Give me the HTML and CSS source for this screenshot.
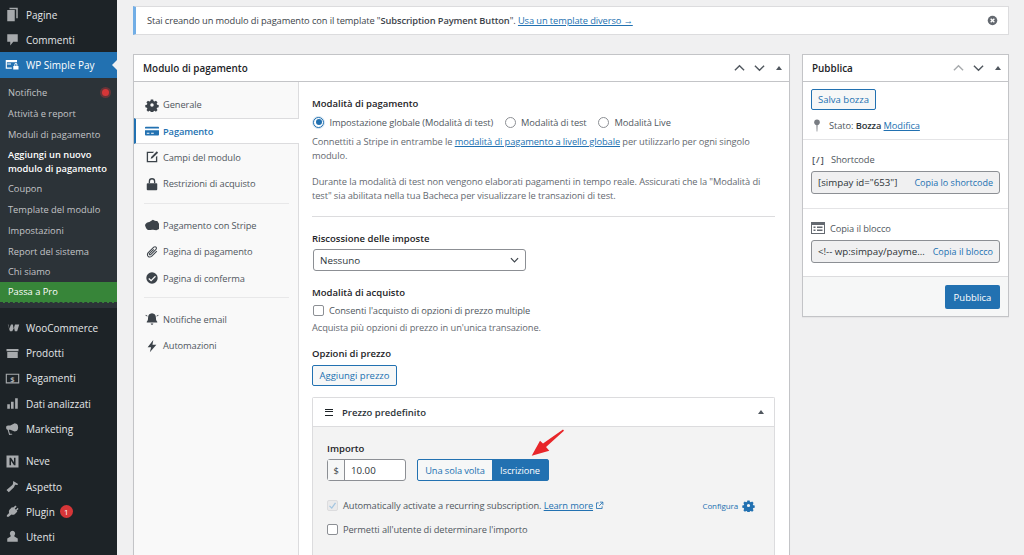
FILE: index.html
```html
<!DOCTYPE html>
<html lang="it">
<head>
<meta charset="utf-8">
<title>Modulo di pagamento</title>
<link rel="stylesheet" href="styles.css">
</head>
<body>
<div class="app">
  <nav class="sidebar">
    <div class="group">
      <a class="mi"><svg class="mi-ic" viewBox="0 0 20 20"><path d="M6 1h11v14h-2V3H6zM3 4h10v15H3z"/></svg>Pagine</a>
      <a class="mi"><svg class="mi-ic" viewBox="0 0 20 20"><path d="M3 3h14v10h-6l-4 5v-5H3z"/></svg>Commenti</a>
      <a class="mi mi-current"><svg class="mi-ic" viewBox="0 0 20 20"><path d="M1 4h15v3H2.500v7H9v1.500H1zM3 8.500h5V10H3zM11 12h7v4.500h-7zM12.500 12V10a2 2 0 0 1 4 0v2h-1.200v-2a.8.8 0 0 0-1.600 0v2z"/></svg>WP Simple Pay</a>
      <div class="sub">
        <a class="si">Notifiche<span class="dot"></span></a>
        <a class="si">Attività e report</a>
        <a class="si">Moduli di pagamento</a>
        <a class="si si-on">Aggiungi un nuovo modulo di pagamento</a>
        <a class="si">Coupon</a>
        <a class="si">Template del modulo</a>
        <a class="si">Impostazioni</a>
        <a class="si">Report del sistema</a>
        <a class="si">Chi siamo</a>
        <a class="si si-pro">Passa a Pro</a>
      </div>
    </div>
    <div class="group">
      <a class="mi"><svg class="mi-ic" viewBox="0 0 20 20"><path d="M1 6h3.500l1 6 2.500-6h2.500l1 6 1.800-6H19l-2.800 9h-3.100l-1-5-2.400 5H6.600L4.800 9.500 3.800 6z"/></svg>WooCommerce</a>
      <a class="mi"><svg class="mi-ic" viewBox="0 0 20 20"><path d="M2 4h16v3H2zM3 8h14v8H3z"/></svg>Prodotti</a>
      <a class="mi"><svg class="mi-ic" viewBox="0 0 20 20"><path fill-rule="evenodd" d="M1 3.500h18v13H1zM2.500 5v10h15V5z"/><text x="10" y="14" class="dollar">$</text></svg>Pagamenti</a>
      <a class="mi"><svg class="mi-ic" viewBox="0 0 20 20"><path d="M3 11h3.500v6H3zM8 7.500h3.500V17H8zM13.500 3H17v14h-3.500z"/></svg>Dati analizzati</a>
      <a class="mi"><svg class="mi-ic" viewBox="0 0 20 20"><path d="M13 3l3 1c2 2 2 7 0 9l-3 1-6-2.500H5L6.500 17H9l1 1-4.500.500L3.500 11.500C2 11 1.500 10 1.500 8.500S2.500 6 4 6h3z"/></svg>Marketing</a>
    </div>
    <div class="group">
      <a class="mi"><svg class="mi-ic" viewBox="0 0 20 20"><path fill-rule="evenodd" d="M2 2h16v16H2zM6 5v10h2V9l4 6h2V5h-2v6L8 5z"/></svg>Neve</a>
      <a class="mi"><svg class="mi-ic" viewBox="0 0 20 20"><path d="M11 2.500l6.500 4-1 1.500-3-.5-1 2-.5 1.500-7 6.500-3-3 7-6 1.500-1.500z"/></svg>Aspetto</a>
      <a class="mi"><svg class="mi-ic" viewBox="0 0 20 20"><path d="M14 2l1.500 1.500-2.500 2.500 1.500 1.500L17 5l1 1.500-2.500 2.500 1 1-3.500 3.500c-1.500 1-3 1-4.500.5L5 17H2.500v-2l3-3c-.5-1.500-.5-3 .5-4.500L9.500 4l1 1z"/></svg>Plugin<span class="count">1</span></a>
      <a class="mi"><svg class="mi-ic" viewBox="0 0 20 20"><path d="M10 2.500a3.500 3.500 0 0 1 2.500 6V10l4.500 2.500V17H3v-4.500L7.500 10V8.500a3.500 3.500 0 0 1 2.500-6z"/></svg>Utenti</a>
    </div>
  </nav>

  <main class="main">
    <div class="notice">
      <p class="notice-text">Stai creando un modulo di pagamento con il template "<b>Subscription Payment Button</b>". <a class="link">Usa un template diverso →</a></p>
      <svg class="notice-x" viewBox="0 0 12 12"><circle cx="6" cy="6" r="5.200" fill="#646970"/><path d="M4 4l4 4M8 4l-4 4" stroke="#fff" stroke-width="1.500"/></svg>
    </div>

    <div class="columns">
      <section class="box box-main">
        <header class="box-head">
          <h2 class="box-title">Modulo di pagamento</h2>
          <div class="box-ctrl">
            <svg class="ctrl" viewBox="0 0 12 8"><path d="M1 6.500l5-5 5 5" /></svg>
            <svg class="ctrl" viewBox="0 0 12 8"><path d="M1 1.500l5 5 5-5" /></svg>
            <span class="tri"></span>
          </div>
        </header>
        <div class="box-body">
          <ul class="tabs">
            <li class="tab"><svg class="tab-ic" viewBox="0 0 16 16"><path fill-rule="evenodd" d="M6.500 1h3l.4 2 1.300.6 1.800-1.100 2 2.100-1.100 1.700.6 1.300 2 .4v3l-2 .4-.6 1.300 1.100 1.700-2 2.100-1.800-1.100-1.300.6-.4 2h-3l-.4-2-1.300-.6-1.800 1.100-2-2.100 1.100-1.700-.6-1.300-2-.4v-3l2-.4.6-1.300L.9 4.600l2-2.100 1.800 1.100L6 3zM8 5.800a2.200 2.200 0 1 0 0 4.400 2.200 2.200 0 0 0 0-4.400z" transform="translate(.8 .8) scale(.9)"/></svg>Generale</li>
            <li class="tab tab-on"><svg class="tab-ic" viewBox="0 0 16 16"><path fill="#2271b1" d="M1 3h14a1 1 0 0 1 1 1v1H0V4a1 1 0 0 1 1-1zM0 7h16v5a1 1 0 0 1-1 1H1a1 1 0 0 1-1-1zm2 3v1h3v-1zm5 0v1h3v-1z"/></svg>Pagamento</li>
            <li class="tab"><svg class="tab-ic" viewBox="0 0 16 16"><path d="M2 2h8.500L9 3.500H3.500v9h9V8L14 6.500V14H2z"/><path d="M13.500 1.500l1.500 1.500-6.500 6.500-2 .5.500-2z"/></svg>Campi del modulo</li>
            <li class="tab tab-end"><svg class="tab-ic" viewBox="0 0 16 16"><path d="M3 7h10a1 1 0 0 1 1 1v6a1 1 0 0 1-1 1H3a1 1 0 0 1-1-1V8a1 1 0 0 1 1-1z"/><path d="M5 7V5a3 3 0 0 1 6 0v2" fill="none" stroke="#3c434a" stroke-width="1.500"/></svg>Restrizioni di acquisto</li>
            <li class="tab"><svg class="tab-ic" viewBox="0 0 16 16"><path d="M0 8c1-2.500 3-3.500 5-3.500L9 2c1.500 1 3 1.500 5 1.500l2 3v6l-3 1.500c-2-.5-3.500-1-5-.5-2.500 .5-5 .5-6-1-1-1-1.500-2.500-2-4.500z"/></svg>Pagamento con Stripe</li>
            <li class="tab"><svg class="tab-ic" viewBox="0 0 16 16"><path fill="none" stroke="#3c434a" stroke-width="1.200" d="M13.500 7l-6 6c-3 2-6-1-4-4l6.500-6.500c2-1.500 4 .5 2.500 2.500l-6 6c-1 .8-2-.2-1.300-1.300L10 5"/></svg>Pagina di pagamento</li>
            <li class="tab tab-end"><svg class="tab-ic" viewBox="0 0 16 16"><path fill-rule="evenodd" d="M8 1.500a6.500 6.500 0 1 1 0 13 6.500 6.500 0 0 1 0-13zM11.500 5.500L7 10 4.800 7.900 3.800 9 7 12l5.500-5.500z"/></svg>Pagina di conferma</li>
            <li class="tab"><svg class="tab-ic" viewBox="0 0 16 16"><path d="M8 1.500c3 0 4.500 2.500 4.500 5 0 2.500.5 3.500 1.500 4.500v1H2v-1c1-1 1.500-2 1.500-4.500 0-2.500 1.500-5 4.500-5zM6.500 13h3a1.500 1.500 0 0 1-3 0zM1 3l2 1.500-.5.500L.5 4zM15 3l-2 1.500.5.500 2-1z"/></svg>Notifiche email</li>
            <li class="tab"><svg class="tab-ic" viewBox="0 0 16 16"><path d="M9.500 1L3 9.500h4L5.500 15 13 6.500H8.500z"/></svg>Automazioni</li>
          </ul>

          <div class="panel">
            <h3 class="lbl">Modalità di pagamento</h3>
            <div class="radios">
              <label class="radio"><span class="rd rd-on"></span>Impostazione globale (Modalità di test)</label>
              <label class="radio"><span class="rd"></span>Modalità di test</label>
              <label class="radio"><span class="rd"></span>Modalità Live</label>
            </div>
            <p class="desc">Connettiti a Stripe in entrambe le <a class="link">modalità di pagamento a livello globale</a> per utilizzarlo per ogni singolo modulo.</p>
            <p class="desc desc-gap">Durante la modalità di test non vengono elaborati pagamenti in tempo reale. Assicurati che la "Modalità di test" sia abilitata nella tua Bacheca per visualizzare le transazioni di test.</p>
            <hr class="rule">
            <h3 class="lbl lbl-tax">Riscossione delle imposte</h3>
            <div class="select">Nessuno<svg class="sel-ic" viewBox="0 0 10 6"><path d="M1 1l4 4 4-4"/></svg></div>
            <h3 class="lbl lbl-buy">Modalità di acquisto</h3>
            <label class="check check-multi"><span class="cb"></span>Consenti l'acquisto di opzioni di prezzo multiple</label>
            <p class="desc desc-buy">Acquista più opzioni di prezzo in un'unica transazione.</p>
            <h3 class="lbl lbl-price">Opzioni di prezzo</h3>
            <a class="btn btn-add">Aggiungi prezzo</a>

            <div class="price">
              <div class="price-head">
                <span class="burger"></span>
                <b class="price-title">Prezzo predefinito</b>
                <span class="tri"></span>
              </div>
              <div class="price-body">
                <h3 class="lbl">Importo</h3>
                <div class="amount-row">
                  <div class="amount"><span class="cur">$</span><span class="val">10.00</span></div>
                  <div class="toggle"><span class="tg">Una sola volta</span><span class="tg tg-on">Iscrizione</span></div>
                  <svg class="arrow" viewBox="0 0 36 30"><path d="M1.700 26.700L10 11.700l3 2.900L33 .5l1 1.300L16 18l3.300 3.700z" fill="#e8262a"/></svg>
                </div>
                <div class="auto">
                  <label class="check check-auto"><span class="cb cb-dis"><svg class="tick" viewBox="0 0 12 12"><path d="M2 6.500l3 3 5-7"/></svg></span><span class="auto-text">Automatically activate a recurring subscription. <a class="link">Learn more</a></span><svg class="ext" viewBox="0 0 12 12"><path d="M5 2.500H2v7.500h7.500V7M6.500 1.500h4v4M10.500 1.500L5.500 6.500"/></svg></label>
                  <a class="config">Configura<svg class="config-ic" viewBox="0 0 16 16"><path fill-rule="evenodd" d="M6.500 1h3l.4 2 1.300.6 1.800-1.100 2 2.100-1.100 1.700.6 1.300 2 .4v3l-2 .4-.6 1.300 1.100 1.700-2 2.100-1.800-1.100-1.300.6-.4 2h-3l-.4-2-1.300-.6-1.800 1.100-2-2.100 1.100-1.700-.6-1.300-2-.4v-3l2-.4.6-1.300L.9 4.600l2-2.100 1.800 1.100L6 3zM8 5.800a2.200 2.200 0 1 0 0 4.400 2.200 2.200 0 0 0 0-4.400z" transform="translate(.8 .8) scale(.9)"/></svg></a>
                </div>
                <label class="check check-perm"><span class="cb"></span>Permetti all'utente di determinare l'importo</label>
              </div>
            </div>
          </div>
        </div>
      </section>

      <aside class="box box-side">
        <header class="box-head">
          <h2 class="box-title">Pubblica</h2>
          <div class="box-ctrl box-ctrl-side">
            <svg class="ctrl ctrl-dim" viewBox="0 0 12 8"><path d="M1 6.500l5-5 5 5" /></svg>
            <svg class="ctrl" viewBox="0 0 12 8"><path d="M1 1.500l5 5 5-5" /></svg>
            <span class="tri"></span>
          </div>
        </header>
        <div class="sec sec-pub">
          <a class="btn btn-save">Salva bozza</a>
          <div class="state"><svg class="pin" viewBox="0 0 10 16"><circle cx="5" cy="4" r="3.500"/><path d="M4.200 6h1.600L5.400 15.500h-.8z"/></svg><span>Stato: <b>Bozza</b> <a class="link">Modifica</a></span></div>
        </div>
        <div class="sec sec-short">
          <div class="sec-title"><span class="sc-ic">[/]</span>Shortcode</div>
          <div class="copy"><span class="copy-val">[simpay id="653"]</span><a class="copy-btn">Copia lo shortcode</a></div>
        </div>
        <div class="sec sec-block">
          <div class="sec-title"><svg class="bl-ic" viewBox="0 0 14 12"><path fill-rule="evenodd" d="M0 0h14v12H0zM1 3v8h12V3zM2.500 4.500h2v1.500h-2zM6 4.500h5.500v1.500H6zM2.500 7.500h2V9h-2zM6 7.500h5.500V9H6z"/></svg>Copia il blocco</div>
          <div class="copy"><span class="copy-val">&lt;!-- wp:simpay/payme...</span><a class="copy-btn">Copia il blocco</a></div>
        </div>
        <div class="pub-foot"><a class="btn-pub">Pubblica</a></div>
      </aside>
    </div>
  </main>
</div>
</body>
</html>
```
FILE: styles.css
```css
* { box-sizing: border-box; }
html, body { margin: 0; height: 555px; overflow: hidden; }
body { font-family: "Open Sans", "Noto Sans", sans-serif; font-size: 9.300px; letter-spacing: -.1px; color: #3c434a; background: #f0f0f1; }
h2, h3, p, ul { margin: 0; padding: 0; }
ul { list-style: none; }
a { color: inherit; text-decoration: none; }
.link { color: #2271b1; text-decoration: underline; }
b { font-weight: 600; }
.app { display: flex; height: 555px; overflow: hidden; }

/* sidebar */
.sidebar { width: 117px; flex: none; background: #1d2327; color: #f0f0f1; padding-top: 2px; display: flex; flex-direction: column; gap: 7.500px; letter-spacing: 0; }
.mi { display: flex; align-items: center; height: 25.200px; padding-left: 26px; position: relative; font-size: 10px; color: #e4e6e8; }
.mi-ic { position: absolute; left: 5px; top: 5px; width: 15px; height: 15px; fill: #a7aaad; }
.dollar { font: 700 10px "Open Sans", sans-serif; text-anchor: middle; fill: #a7aaad; }
.mi-current { background: #2271b1; color: #fff; height: 26px; }
.mi-current .mi-ic { fill: #fff; }
.mi-current::after { content: ""; position: absolute; right: 0; top: 8px; border: 5px solid transparent; border-right-color: #f0f0f1; border-left-width: 0; }
.sub { background: #2c3338; padding: 4px 0 5px; }
.si { display: flex; align-items: center; min-height: 20.750px; padding: 0 8px; font-size: 9.300px; line-height: 13.500px; color: #c3c4c7; position: relative; }
.si-on { color: #fff; font-weight: 600; padding-top: 3.500px; padding-bottom: 3.500px; }
.si-pro { background: #378539; color: #fff; height: 20.500px; min-height: 0; border-bottom: 1px dashed #2c3338; }
.dot { position: absolute; left: 102px; top: 7px; width: 7px; height: 7px; border-radius: 50%; background: #d63638; box-shadow: 0 0 0 2px rgba(214, 54, 56, .35); }
.count { display: inline-flex; align-items: center; justify-content: center; width: 13px; height: 13px; border-radius: 50%; margin-left: 5px; background: #d63638; color: #fff; font-size: 8px; }

/* main */
.main { flex: 1; min-width: 0; padding: 6px 15px 0 16px; }
.notice { display: flex; align-items: center; justify-content: space-between; height: 29px; padding: 0 10px 0 11px; background: #fff; border: 1px solid #dcdcde; border-left: 3px solid #72aee6; }
.notice-x { width: 11px; height: 11px; }
.columns { display: flex; align-items: flex-start; gap: 12px; margin-top: 19px; }

.box { background: #fff; border: 1px solid #c3c4c7; box-shadow: 0 1px 1px rgba(0, 0, 0, .04); }
.box-main { width: 657px; height: 501px; display: flex; flex-direction: column; border-bottom: 0; }
.box-side { width: 207px; }
.box-head { display: flex; align-items: center; justify-content: space-between; height: 27px; margin-bottom: -1px; padding: 0 7px 1px 9px; border-bottom: 1px solid #c3c4c7; flex: none; }
.box-title { font-size: 9.900px; font-weight: 600; color: #1d2327; letter-spacing: 0; }
.box-ctrl { display: flex; align-items: center; gap: 9px; }
.ctrl { width: 11px; height: 8px; fill: none; stroke: #50575e; stroke-width: 1.500px; }
.ctrl-dim { stroke: #a7aaad; }
.tri { display: block; width: 0; height: 0; border: 3.500px solid transparent; border-top-width: 0; border-bottom: 4px solid #50575e; margin-left: 2px; }

.box-body { flex: 1; display: flex; min-height: 0; padding-top: 1px; }
.tabs { width: 165px; flex: none; background: #f9f9f9; border-right: 1px solid #dcdcde; padding-top: 9.500px; }
.tab { display: flex; align-items: center; height: 26.400px; padding-left: 11px; color: #50575e; margin-right: -1px; }
.tab-ic { width: 14px; height: 14px; margin-right: 4px; fill: #3c434a; flex: none; }
.tab-on { background: #fff; color: #2271b1; font-weight: 600; border-left: 2px solid #2271b1; padding-left: 9px; border-top: 1px solid #dcdcde; border-bottom: 1px solid #dcdcde; position: relative; }
.tab-end { margin-bottom: 15px; position: relative; }
.tab-end::after { content: ""; position: absolute; left: 10px; right: 10px; bottom: -7px; height: 1px; background: #e8e8e9; }

.panel { flex: 1; min-width: 0; padding: 15px 14px 0 13px; }
.lbl { font-size: 9.500px; font-weight: 600; color: #1d2327; line-height: 13px; letter-spacing: 0; }
.radios { display: flex; gap: 11.500px; margin: 5px 0 0 1px; height: 14px; align-items: center; }
.radio { display: flex; align-items: center; gap: 5.500px; color: #50575e; }
.rd { width: 11px; height: 11px; border-radius: 50%; border: 1px solid #8c8f94; background: #fff; position: relative; flex: none; }
.rd-on { border-color: #2271b1; box-shadow: 0 0 0 1px #d5e4f0; }
.rd-on::after { content: ""; position: absolute; inset: 1.500px; border-radius: 50%; background: #2271b1; }
.desc { line-height: 14px; margin-top: 6px; color: #646970; }
.desc-gap { margin-top: 12px; }
.rule { border: 0; height: 1px; background: #dcdcde; margin: 13px 0 0; }
.lbl-tax { margin-top: 15px; }
.select { display: flex; align-items: center; justify-content: space-between; width: 213px; height: 22px; margin: 4px 0 0 1px; padding: 0 6px; background: #fff; border: 1px solid #8c8f94; border-radius: 3px; color: #2c3338; font-size: 9.800px; letter-spacing: 0; }
.sel-ic { width: 9px; height: 6px; fill: none; stroke: #3c434a; stroke-width: 1.300px; }
.lbl-buy { margin-top: 15px; }
.check { display: flex; align-items: center; gap: 5px; color: #50575e; }
.check-multi { margin-top: 4px; height: 14px; margin-left: 1px; }
.cb { width: 11px; height: 11px; border: 1px solid #8c8f94; border-radius: 2px; background: #fff; flex: none; display: flex; }
.desc-buy { margin-top: 4px; line-height: 13px; }
.lbl-price { margin-top: 13px; }
.btn { display: inline-flex; align-items: center; justify-content: center; border: 1px solid #2271b1; border-radius: 2px; color: #2271b1; background: #f6f7f7; font-size: 9.500px; letter-spacing: 0; }
.btn-add { width: 85px; height: 21px; margin-top: 5px; }
.price { margin-top: 11px; border: 1px solid #dcdcde; border-bottom: 0; background: #f3f3f3; height: 158px; border-radius: 2px 2px 0 0; }
.price-head { display: flex; align-items: center; height: 29px; padding: 0 10px 0 12px; background: #fff; border-bottom: 1px solid #dcdcde; }
.burger { width: 8px; height: 7px; border-top: 1.500px solid #1d2327; border-bottom: 1.500px solid #1d2327; position: relative; margin-right: 9px; }
.burger::after { content: ""; position: absolute; left: 0; right: 0; top: 1.500px; height: 1.200px; background: #1d2327; }
.price-title { flex: 1; font-size: 9.500px; color: #2c3338; font-weight: 600; letter-spacing: 0; }
.price-body { padding: 15px 14px 0; }
.amount-row { display: flex; align-items: center; gap: 11px; margin-top: 4px; position: relative; }
.amount { display: flex; width: 79px; height: 22px; background: #fff; border: 1px solid #8c8f94; border-radius: 3px; }
.cur { width: 17px; display: flex; align-items: center; justify-content: center; background: #f6f7f7; border-right: 1px solid #8c8f94; }
.val { padding-left: 6px; display: flex; align-items: center; color: #2c3338; font-size: 9.700px; letter-spacing: 0; }
.toggle { display: flex; width: 132px; height: 22px; border: 1px solid #2271b1; border-radius: 2px; background: #f6f7f7; color: #2271b1; }
.tg { flex: 1; display: flex; align-items: center; justify-content: center; }
.tg-on { flex: none; width: 56px; background: #2271b1; color: #fff; }
.arrow { position: absolute; left: 203px; top: -30px; width: 36px; height: 30px; }
.auto { display: flex; align-items: center; justify-content: space-between; margin-top: 17px; height: 14px; }
.auto-text { white-space: nowrap; }
.cb-dis { background: #eaeaeb; border-color: #dcdcde; }
.tick { width: 9px; height: 9px; fill: none; stroke: #a3c5e0; stroke-width: 1.700px; }
.ext { width: 9px; height: 9px; margin-left: -3px; fill: none; stroke: #2271b1; stroke-width: 1.100px; }
.config { display: flex; align-items: center; gap: 4px; color: #2271b1; font-size: 8px; margin-right: 5px; }
.config-ic { width: 13px; height: 13px; fill: #2271b1; }
.check-perm { margin-top: 10px; height: 14px; }

/* publish */
.sec { padding: 8px 8px 0; border-bottom: 1px solid #e4e4e6; }
.sec-pub { height: 59px; }
.btn-save { width: 65px; height: 21px; }
.state { display: flex; align-items: center; margin-top: 9px; color: #50575e; }
.state b { color: #2c3338; }
.pin { width: 8px; height: 13px; fill: #787c82; margin: 0 8px 0 2px; }
.sec-title { display: flex; align-items: center; height: 14px; color: #50575e; }
.sc-ic { width: 20px; font-weight: 600; color: #50575e; letter-spacing: 1px; padding-left: 1px; }
.bl-ic { width: 14px; height: 12px; margin-right: 5px; fill: #646970; }
.sec-short { height: 69px; padding-top: 12px; }
.sec-block { height: 68px; padding-top: 12px; border-bottom: 1px solid #dcdcde; }
.copy { display: flex; align-items: center; justify-content: space-between; height: 23px; margin-top: 5px; padding: 0 6px; background: #f0f0f1; border: 1px solid #8c8f94; border-radius: 3px; white-space: nowrap; }
.copy-btn { color: #2271b1; font-size: 9px; letter-spacing: 0; }
.copy-val { color: #2c3338; font-size: 9.700px; letter-spacing: 0; }
.pub-foot { display: flex; justify-content: flex-end; height: 39px; padding: 8px 8px 0; background: #f6f7f7; }
.btn-pub { display: flex; align-items: center; justify-content: center; width: 55px; height: 24px; background: #2271b1; color: #fff; border-radius: 2px; letter-spacing: 0; font-size: 9.500px; }
```
